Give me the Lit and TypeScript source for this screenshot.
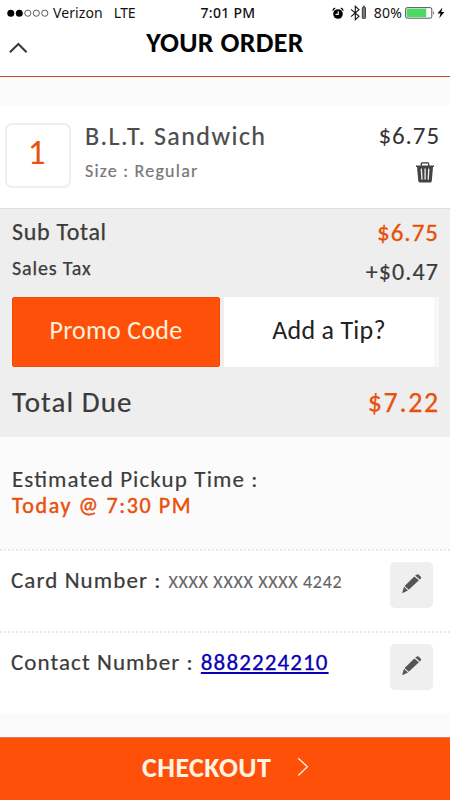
import { LitElement, html, css, svg } from "lit";
import { customElement } from "lit/decorators.js";

const pencil = html`<svg class="pencil" viewBox="0 0 20 20" width="20" height="20">
  <path fill="#555653" d="M14 .9 L15.6 .3 Q16.4 .2 17.1 .9 L19 2.9 Q19.4 3.7 18.9 4.4 L17.8 5.4 L13.2 1.6Z" />
  <path fill="#555653" d="M12.3 2.5 L16.9 6.2 L6.8 15.8 L2.6 12Z" />
  <path fill="#555653" d="M2 12.7 L6 16.4 L.8 19 Q.2 19.2 .3 18.5Z" />
</svg>`;

const trash = html`<svg class="trash" viewBox="0 0 18 21" width="18" height="21">
  <path fill="none" stroke="#333" stroke-width="1.2" d="M5.3 4 V1.8 Q5.3 .8 6.2 .8 H11.8 Q12.7 .8 12.7 1.8 V4" />
  <path fill="#444" d="M0 3.6 H18 V5 H17 L15.8 19 Q15.7 20.4 14.4 20.4 H3.8 Q2.5 20.4 2.3 19 L1 5 H0Z" />
  <path fill="none" stroke="#f2f2f2" stroke-width="1.3" d="M5.3 6.6 L6 17.6 M9.1 6.6 V17.6 M12.8 6.6 L12.2 17.6" />
</svg>`;

@customElement("app-root")
export class AppRoot extends LitElement {
  static styles = css`
    :host { display: flex; flex-direction: column; box-sizing: border-box; width: 450px; height: 800px; overflow: hidden;
      background: #fbfbfb; color: #3b3b3b; font-family: Carlito, Lato, sans-serif; white-space: nowrap; }
    svg { display: block; flex: none; }
    .header { height: 77px; box-sizing: border-box; background: #fff; border-bottom: 1px solid #c4481a; }
    .status { display: grid; grid-template-columns: 1fr auto 1fr; height: 26px; align-items: center; color: #111;
      font: 14px/26px "Noto Sans", sans-serif; padding: 0 5px 0 7px; }
    .left, .right { display: flex; align-items: center; }
    .right { justify-content: flex-end; }
    .carrier { margin-left: 4px; letter-spacing: .1px; }
    .net { margin-left: 11px; letter-spacing: -.5px; }
    .time { font-weight: 500; letter-spacing: .3px; margin-left: 4px; }
    .bluetooth { margin-left: 6px; }
    .percent { margin: 0 3px 0 7px; letter-spacing: .2px; }
    .bolt { margin-left: 2px; }
    .bar { display: grid; grid-template-columns: 1fr auto 1fr; }
    .chev { margin: 16px 0 0 9px; }
    .title { font-weight: 700; font-size: 28px; line-height: 32px; letter-spacing: .3px; margin-top: 1px; color: #050505; }
    .item { display: flex; margin-top: 28px; height: 103px; box-sizing: border-box; background: #fff; padding-left: 5px; }
    .qty { width: 66px; height: 65px; box-sizing: border-box; margin-top: 18px; border: 2px solid #eee; border-radius: 7px;
      color: #e8500c; font-size: 35px; line-height: 55px; text-align: center; padding-right: 3px; }
    .desc { flex: 1; padding: 16px 0 0 14px; }
    .name { font-size: 26px; line-height: 30px; letter-spacing: 1.45px; color: #4c4c4c; -webkit-text-stroke: .2px #4c4c4c; }
    .size { font-size: 18px; line-height: 20px; letter-spacing: 1.22px; color: #777; margin-top: 10px; -webkit-text-stroke: .2px #777; }
    .cost { padding: 16px 11px 0 0; display: flex; flex-direction: column; align-items: flex-end; }
    .price { font-size: 25px; line-height: 30px; letter-spacing: .92px; margin-right: -1px; color: #333; }
    .trash { margin: 11px 5px 0 0; }
    .totals { height: 229px; box-sizing: border-box; border-top: 1px solid #dedede; background: #eee; padding: 8px 11px 0 12px; }
    .row { display: flex; justify-content: space-between; align-items: flex-start; }
    .sub { font-size: 24px; line-height: 30px; letter-spacing: .68px; -webkit-text-stroke: .25px #3b3b3b; }
    .subv { font-size: 25px; line-height: 30px; letter-spacing: 1px; margin-top: 1px; color: #e8500c; -webkit-text-stroke: .35px #e8500c; }
    .taxrow { margin-top: 8px; }
    .tax { font-size: 20px; line-height: 24px; letter-spacing: .85px; -webkit-text-stroke: .25px #3b3b3b; }
    .taxv { font-size: 24px; line-height: 30px; letter-spacing: 1.1px; margin-top: 1px; -webkit-text-stroke: .2px #3b3b3b; }
    .buttons { display: flex; height: 70px; margin-top: 10px; }
    .btn { font-size: 26px; line-height: 66px; text-align: center; letter-spacing: .27px; }
    .promo { width: 208px; background: #ff500a; color: #fff0dd; border-radius: 3px; box-shadow: inset 0 0 0 1px #f04a0a; }
    .tip { flex: 1; margin-left: 4px; background: #fff; color: #222; border-right: 5px solid #f8f8f8; }
    .due { font-size: 29px; line-height: 36px; margin-top: 17px; }
    .duel { letter-spacing: 1.08px; -webkit-text-stroke: .2px #3b3b3b; }
    .duev { letter-spacing: 1.7px; margin-right: -1px; font-size: 28px; color: #e8500c; margin-top: 1px; -webkit-text-stroke: .25px #e8500c; }
    .pickup { height: 112px; box-sizing: border-box; padding: 29px 0 0 12px; font-size: 23px; line-height: 26px; }
    .est { letter-spacing: 1.11px; font-feature-settings: "liga" 1; -webkit-text-stroke: .15px #3b3b3b; }
    .when { margin-top: 1px; font-size: 22px; letter-spacing: 1.6px; color: #e8500c; -webkit-text-stroke: .45px #e8500c; }
    .detail { display: flex; height: 82px; box-sizing: border-box; background: #fff; border-top: 2px dotted #e9e9e9; padding: 16px 17px 0 11px; font-size: 23px; line-height: 26px; }
    .label { letter-spacing: 1.08px; -webkit-text-stroke: .2px #3b3b3b; }
    .card { font-size: 18px; letter-spacing: .68px; color: #666; margin-left: 7px; padding-top: 2px; -webkit-text-stroke: .15px #666; }
    .phone { letter-spacing: 1.12px; color: #0a00b4; margin-left: 7px; text-decoration: underline; text-underline-offset: 2px; -webkit-text-stroke: .3px #0a00b4; }
    .edit { margin: -5px 0 0 auto; width: 43px; height: 46px; border-radius: 5px; background: #efefef; display: grid; place-items: center; padding-bottom: 2px; box-sizing: border-box; }
    .checkout { height: 63px; box-sizing: border-box; margin-top: auto; border-top: 1px solid #e28254; background: #ff500a; color: #fff3e4;
      display: flex; padding: 12px 0 0 142px; font-weight: 700; font-size: 28px; line-height: 36px; letter-spacing: .45px; }
    .go { margin: 7px 0 0 26px; }
  `;

  private detail(label: string, value: unknown) {
    return html`<div class="detail"><span class="label">${label}</span>${value}<div class="edit">${pencil}</div></div>`;
  }

  render() {
    return html`
      <div class="header">
        <div class="status">
          <div class="left">
            <svg width="42" height="10" viewBox="0 0 42 10">
              ${[0, 1, 2, 3, 4].map((i) => svg`<circle cx=${3.8 + i * 8.5} cy="5.2" r=${i < 2 ? 3.5 : 3.1} fill=${i < 2 ? "#000" : "none"} stroke=${i < 2 ? "none" : "#333"} stroke-width=".8" />`)}
            </svg>
            <span class="carrier">Verizon</span><span class="net">LTE</span>
          </div>
          <div class="time">7:01 PM</div>
          <div class="right">
            <svg width="12" height="13" viewBox="0 0 12 13">
              <circle cx="6" cy="7" r="4.8" fill="#000" />
              <path d="M.8 3.6 Q1.3 1.6 3.2 1.2 M11.2 3.6 Q10.7 1.6 8.8 1.2" fill="none" stroke="#000" stroke-width="1.3" />
              <path d="M6.3 4.2 V7.4 H3.6" fill="none" stroke="#fff" stroke-width="1.1" />
            </svg>
            <svg class="bluetooth" width="17" height="16" viewBox="0 0 17 16">
              <path d="M1 4.4 L9 11.3 L5.3 14.7 V1.3 L9 4.7 L1 11.6" fill="none" stroke="#111" stroke-width="1.1" />
              <rect x="12.3" y="2.3" width="3.2" height="11.2" rx=".8" fill="#777" stroke="#222" stroke-width=".8" />
              <path d="M12.8 1.3 H15" stroke="#333" />
            </svg>
            <span class="percent">80%</span>
            <svg width="30" height="12" viewBox="0 0 30 12">
              <rect x=".6" y=".6" width="26.2" height="10.6" rx="1.6" fill="#fff" stroke="#444" stroke-width=".9" />
              <rect x="1.6" y="1.6" width="19.6" height="8.6" fill="#4cd964" />
              <path d="M28.3 3.8 Q29.8 5.9 28.3 8Z" fill="#222" />
            </svg>
            <svg class="bolt" width="8" height="12" viewBox="0 0 8 12"><path d="M5.4 .6 L.5 6.6 H3.6 L2.2 11.2 L7.4 5 H4.3Z" fill="#000" /></svg>
          </div>
        </div>
        <div class="bar">
          <svg class="chev" width="19" height="12" viewBox="0 0 19 12"><path d="M.9 10.2 L9.4 2 L17.6 10.2" fill="none" stroke="#3a3a3a" stroke-width="2.1" /></svg>
          <div class="title">YOUR ORDER</div>
        </div>
      </div>
      <div class="item">
        <div class="qty">1</div>
        <div class="desc"><div class="name">B.L.T. Sandwich</div><div class="size">Size : Regular</div></div>
        <div class="cost"><div class="price">$6.75</div>${trash}</div>
      </div>
      <div class="totals">
        <div class="row"><span class="sub">Sub Total</span><span class="subv">$6.75</span></div>
        <div class="row taxrow"><span class="tax">Sales Tax</span><span class="taxv">+$0.47</span></div>
        <div class="buttons"><div class="btn promo">Promo Code</div><div class="btn tip">Add a Tip?</div></div>
        <div class="row due"><span class="duel">Total Due</span><span class="duev">$7.22</span></div>
      </div>
      <div class="pickup"><div class="est">Estimated Pickup Time :</div><div class="when">Today @ 7:30 PM</div></div>
      ${this.detail("Card Number :", html`<span class="card">XXXX XXXX XXXX 4242</span>`)}
      ${this.detail("Contact Number :", html`<span class="phone">8882224210</span>`)}
      <div class="checkout"><span>CHECKOUT</span>
        <svg class="go" width="12" height="20" viewBox="0 0 12 20"><path d="M1.2 1.2 L10.4 9.8 L1.2 18.4" fill="none" stroke="#fff0dd" stroke-width="1.4" /></svg>
      </div>`;
  }
}
